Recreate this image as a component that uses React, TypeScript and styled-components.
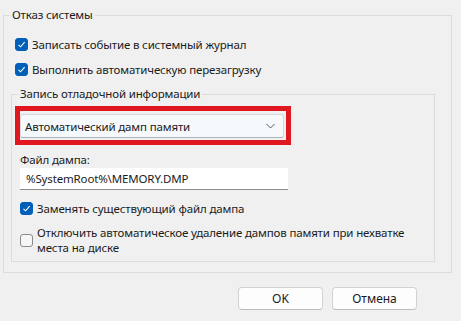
import styled, { createGlobalStyle } from "styled-components";

const GlobalStyle = createGlobalStyle`
  html, body {
    margin: 0;
    padding: 0;
    background: #f0f0f0;
  }
  body {
    font-family: "Noto Sans", "Open Sans", sans-serif;
    font-size: 11.5px;
    letter-spacing: -0.15px;
    color: #1b1b1b;
  }
`;

const Page = styled.div`
  width: 461px;
  height: 321px;
  padding-top: 7px;
  box-sizing: border-box;
  overflow: hidden;
`;

const Group = styled.fieldset<{ $inner?: boolean }>`
  margin: ${(p) => (p.$inner ? "7px 16px 0 7px" : "0 9px 0 3px")};
  padding: ${(p) => (p.$inner ? "0 0 6px 0" : "0 0 10px 0")};
  border: 1px solid #dcdcdc;
  border-radius: 0;
  min-width: 0;
`;

const Legend = styled.legend`
  margin-left: 6px;
  padding: 0 2px;
  line-height: 16px;
`;

const Body = styled.div<{ $pad: number; $top: number }>`
  padding-left: ${(p) => p.$pad}px;
  padding-top: ${(p) => p.$top}px;
  display: flex;
  flex-direction: column;
`;

const CheckRow = styled.label<{ $top?: number }>`
  display: flex;
  align-items: center;
  gap: 4px;
  min-height: 20px;
  margin-top: ${(p) => p.$top ?? 0}px;
  line-height: 15px;
  white-space: nowrap;
`;

const Box = styled.span<{ $checked?: boolean }>`
  flex: none;
  width: 13px;
  height: 13px;
  box-sizing: border-box;
  border-radius: 3px;
  display: flex;
  align-items: center;
  justify-content: center;
  background: ${(p) => (p.$checked ? "#005fb8" : "#f6f6f6")};
  border: 1px solid ${(p) => (p.$checked ? "#005fb8" : "#8b8b8b")};
`;

const Highlight = styled.div`
  margin: 4px 0 0 3px;
  width: 276px;
  box-sizing: border-box;
  border: 5px solid #e0171f;
  padding: 3px 2px 2px 0;
`;

const Select = styled.div`
  height: 24px;
  box-sizing: border-box;
  border: 1px solid #d4d8dc;
  border-bottom-color: #a9b4bd;
  border-radius: 3px;
  background: #f6f9fc;
  display: flex;
  align-items: center;
  justify-content: space-between;
  padding: 0 8px 0 4px;
`;

const FieldLabel = styled.div`
  margin: 7px 0 0 8px;
  line-height: 16px;
`;

const TextField = styled.div`
  margin-left: 8px;
  width: 268px;
  height: 22px;
  box-sizing: border-box;
  background: #ffffff;
  border-bottom: 1px solid #8c8c8c;
  padding-left: 6px;
  display: flex;
  align-items: center;
`;

const Inset = styled.div`
  padding-left: 8px;
  display: flex;
  flex-direction: column;
`;

const Footer = styled.div`
  display: flex;
  gap: 9px;
  padding: 14px 44px 0 0;
  justify-content: flex-end;
`;

const Button = styled.button`
  width: 85px;
  height: 23px;
  box-sizing: border-box;
  border: 1px solid #d2d2d2;
  border-bottom-color: #bdbdbd;
  border-radius: 4px;
  background: #fdfdfd;
  font-family: inherit;
  font-size: 12px;
  color: #1b1b1b;
  padding: 0;
`;

function Check({ checked }: { checked?: boolean }) {
  return (
    <Box $checked={checked}>
      {checked && (
        <svg width="9" height="9" viewBox="0 0 9 9">
          <path d="M1.5 4.8 L3.6 6.8 L7.6 2.2" fill="none" stroke="#fff" strokeWidth="1.1" />
        </svg>
      )}
    </Box>
  );
}

export default function App() {
  return (
    <>
      <GlobalStyle />
      <Page>
        <Group>
          <Legend>Отказ системы</Legend>
          <Body $pad={11} $top={11}>
            <CheckRow>
              <Check checked />
              Записать событие в системный журнал
            </CheckRow>
            <CheckRow $top={5}>
              <Check checked />
              Выполнить автоматическую перезагрузку
            </CheckRow>
          </Body>
          <Group $inner>
            <Legend>Запись отладочной информации</Legend>
            <Highlight>
              <Select>
                <span>Автоматический дамп памяти</span>
                <svg width="9" height="6" viewBox="0 0 9 6">
                  <path d="M0.5 1 L4.5 5 L8.5 1" fill="none" stroke="#5c5c5c" strokeWidth="1" />
                </svg>
              </Select>
            </Highlight>
            <FieldLabel>Файл дампа:</FieldLabel>
            <TextField>%SystemRoot%\MEMORY.DMP</TextField>
            <Inset>
              <CheckRow $top={8}>
                <Check checked />
                Заменять существующий файл дампа
              </CheckRow>
              <CheckRow $top={7}>
                <Check />
                <span>
                  Отключить автоматическое удаление дампов памяти при нехватке
                  <br />
                  места на диске
                </span>
              </CheckRow>
            </Inset>
          </Group>
        </Group>
        <Footer>
          <Button>OK</Button>
          <Button>Отмена</Button>
        </Footer>
      </Page>
    </>
  );
}
